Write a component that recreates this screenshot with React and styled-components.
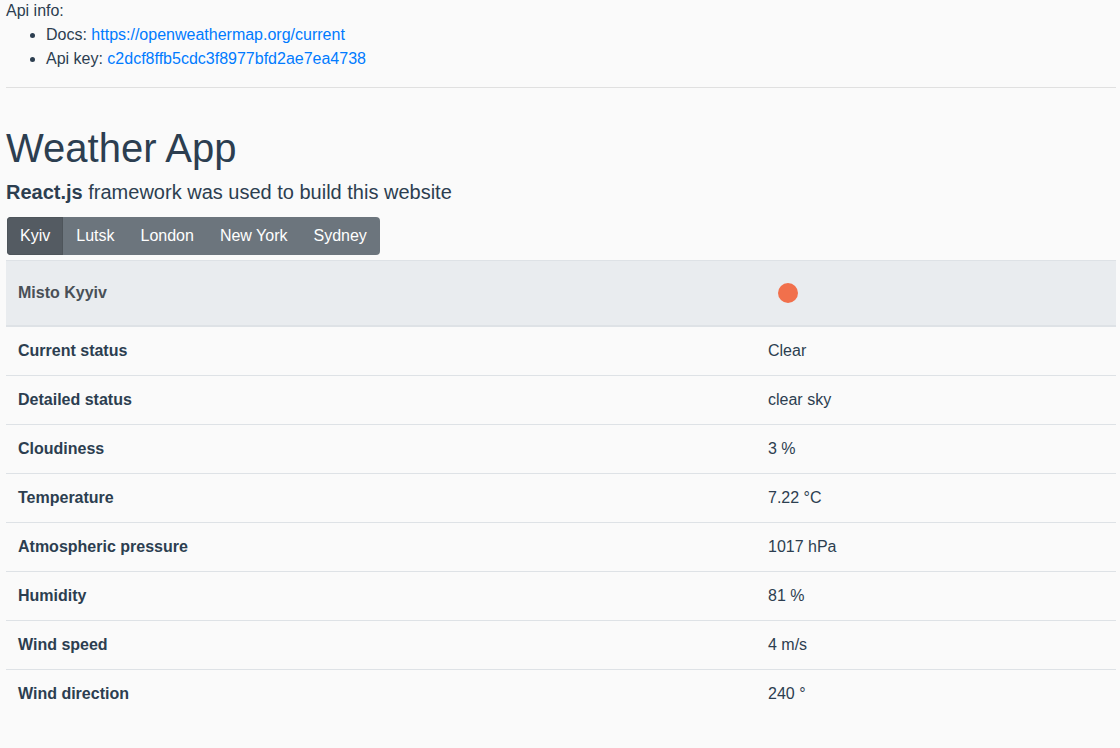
import React, { useState } from "react";
import styled, { createGlobalStyle } from "styled-components";

const cities = ["Kyiv", "Lutsk", "London", "New York", "Sydney"];

const rows = [
  ["Current status", "Clear"],
  ["Detailed status", "clear sky"],
  ["Cloudiness", "3 %"],
  ["Temperature", "7.22 °C"],
  ["Atmospheric pressure", "1017 hPa"],
  ["Humidity", "81 %"],
  ["Wind speed", "4 m/s"],
  ["Wind direction", "240 °"],
];

const GlobalStyle = createGlobalStyle`
  html, body {
    margin: 0;
    padding: 0;
    background: #fafafa;
    overflow: hidden;
  }
  body {
    font-family: "Liberation Sans", Arial, sans-serif;
    font-size: 16px;
    line-height: 24px;
    color: #2c3e50;
  }
`;

const Page = styled.div`
  height: 748px;
  padding: 0 4px 0 6px;
  margin-top: -1px;
`;

const InfoList = styled.ul`
  margin: 0 0 16px;
  padding-left: 40px;
`;

const Divider = styled.hr`
  border: 0;
  border-top: 1px solid rgba(0, 0, 0, 0.1);
  margin: 16px 0 36px;
`;

const DocLink = styled.a`
  color: #007bff;
  text-decoration: none;
`;

const Title = styled.h1`
  margin: 0 0 5px;
  font-size: 40px;
  line-height: 48px;
  font-weight: 400;
`;

const Lead = styled.p`
  margin: 0 0 10px;
  font-size: 20px;
  line-height: 30px;
`;

const CityGroup = styled.div`
  display: inline-flex;
  vertical-align: top;
  margin-left: 1px;
`;

const CityButton = styled.button`
  height: 38px;
  padding: 0 13px;
  border: 0;
  color: #fff;
  font: inherit;
  background: ${(p) => (p.$active ? "#545b62" : "#6c757d")};
  box-shadow: ${(p) => (p.$active ? "inset 0 0 0 1px #4e555b" : "none")};
  cursor: pointer;
  &:first-child {
    border-radius: 4px 0 0 4px;
  }
  &:last-child {
    border-radius: 0 4px 4px 0;
  }
`;

const GroupRow = styled.div`
  height: 43px;
`;

const WeatherTable = styled.table`
  width: 100%;
  border-collapse: collapse;
  table-layout: fixed;
`;

const HeadRow = styled.tr`
  background: #e9ecef;
  color: #495057;
  border-top: 1px solid #dee2e6;
  border-bottom: 2px solid #dee2e6;
  height: 65px;
`;

const LabelCell = styled.th`
  box-sizing: border-box;
  width: 750px;
  padding: 12px;
  text-align: left;
  font-weight: 700;
`;

const ValueCell = styled.td`
  padding: 12px;
`;

const BodyRow = styled.tr`
  height: 49px;
  border-bottom: 1px solid #dee2e6;
  &:last-child {
    border-bottom: 0;
  }
`;

const StatusIcon = styled.svg`
  display: block;
  margin-left: 9px;
`;

const App = () => {
  const [city, setCity] = useState("Kyiv");

  return (
    <Page>
      <GlobalStyle />
      <div>Api info:</div>
      <InfoList>
        <li>
          Docs: <DocLink href="#docs">https://openweathermap.org/current</DocLink>
        </li>
        <li>
          Api key: <DocLink href="#key">c2dcf8ffb5cdc3f8977bfd2ae7ea4738</DocLink>
        </li>
      </InfoList>
      <Divider />
      <Title>Weather App</Title>
      <Lead>
        <strong>React.js</strong> framework was used to build this website
      </Lead>
      <GroupRow>
        <CityGroup>
          {cities.map((name) => (
            <CityButton key={name} $active={name === city} onClick={() => setCity(name)}>
              {name}
            </CityButton>
          ))}
        </CityGroup>
      </GroupRow>
      <WeatherTable>
        <thead>
          <HeadRow>
            <LabelCell>Misto Kyyiv</LabelCell>
            <ValueCell>
              <StatusIcon width="22" height="22" viewBox="0 0 22 22">
                <circle cx="11" cy="11" r="10" fill="#f1704c" />
              </StatusIcon>
            </ValueCell>
          </HeadRow>
        </thead>
        <tbody>
          {rows.map(([label, value]) => (
            <BodyRow key={label}>
              <LabelCell>{label}</LabelCell>
              <ValueCell>{value}</ValueCell>
            </BodyRow>
          ))}
        </tbody>
      </WeatherTable>
    </Page>
  );
};

export default App;
